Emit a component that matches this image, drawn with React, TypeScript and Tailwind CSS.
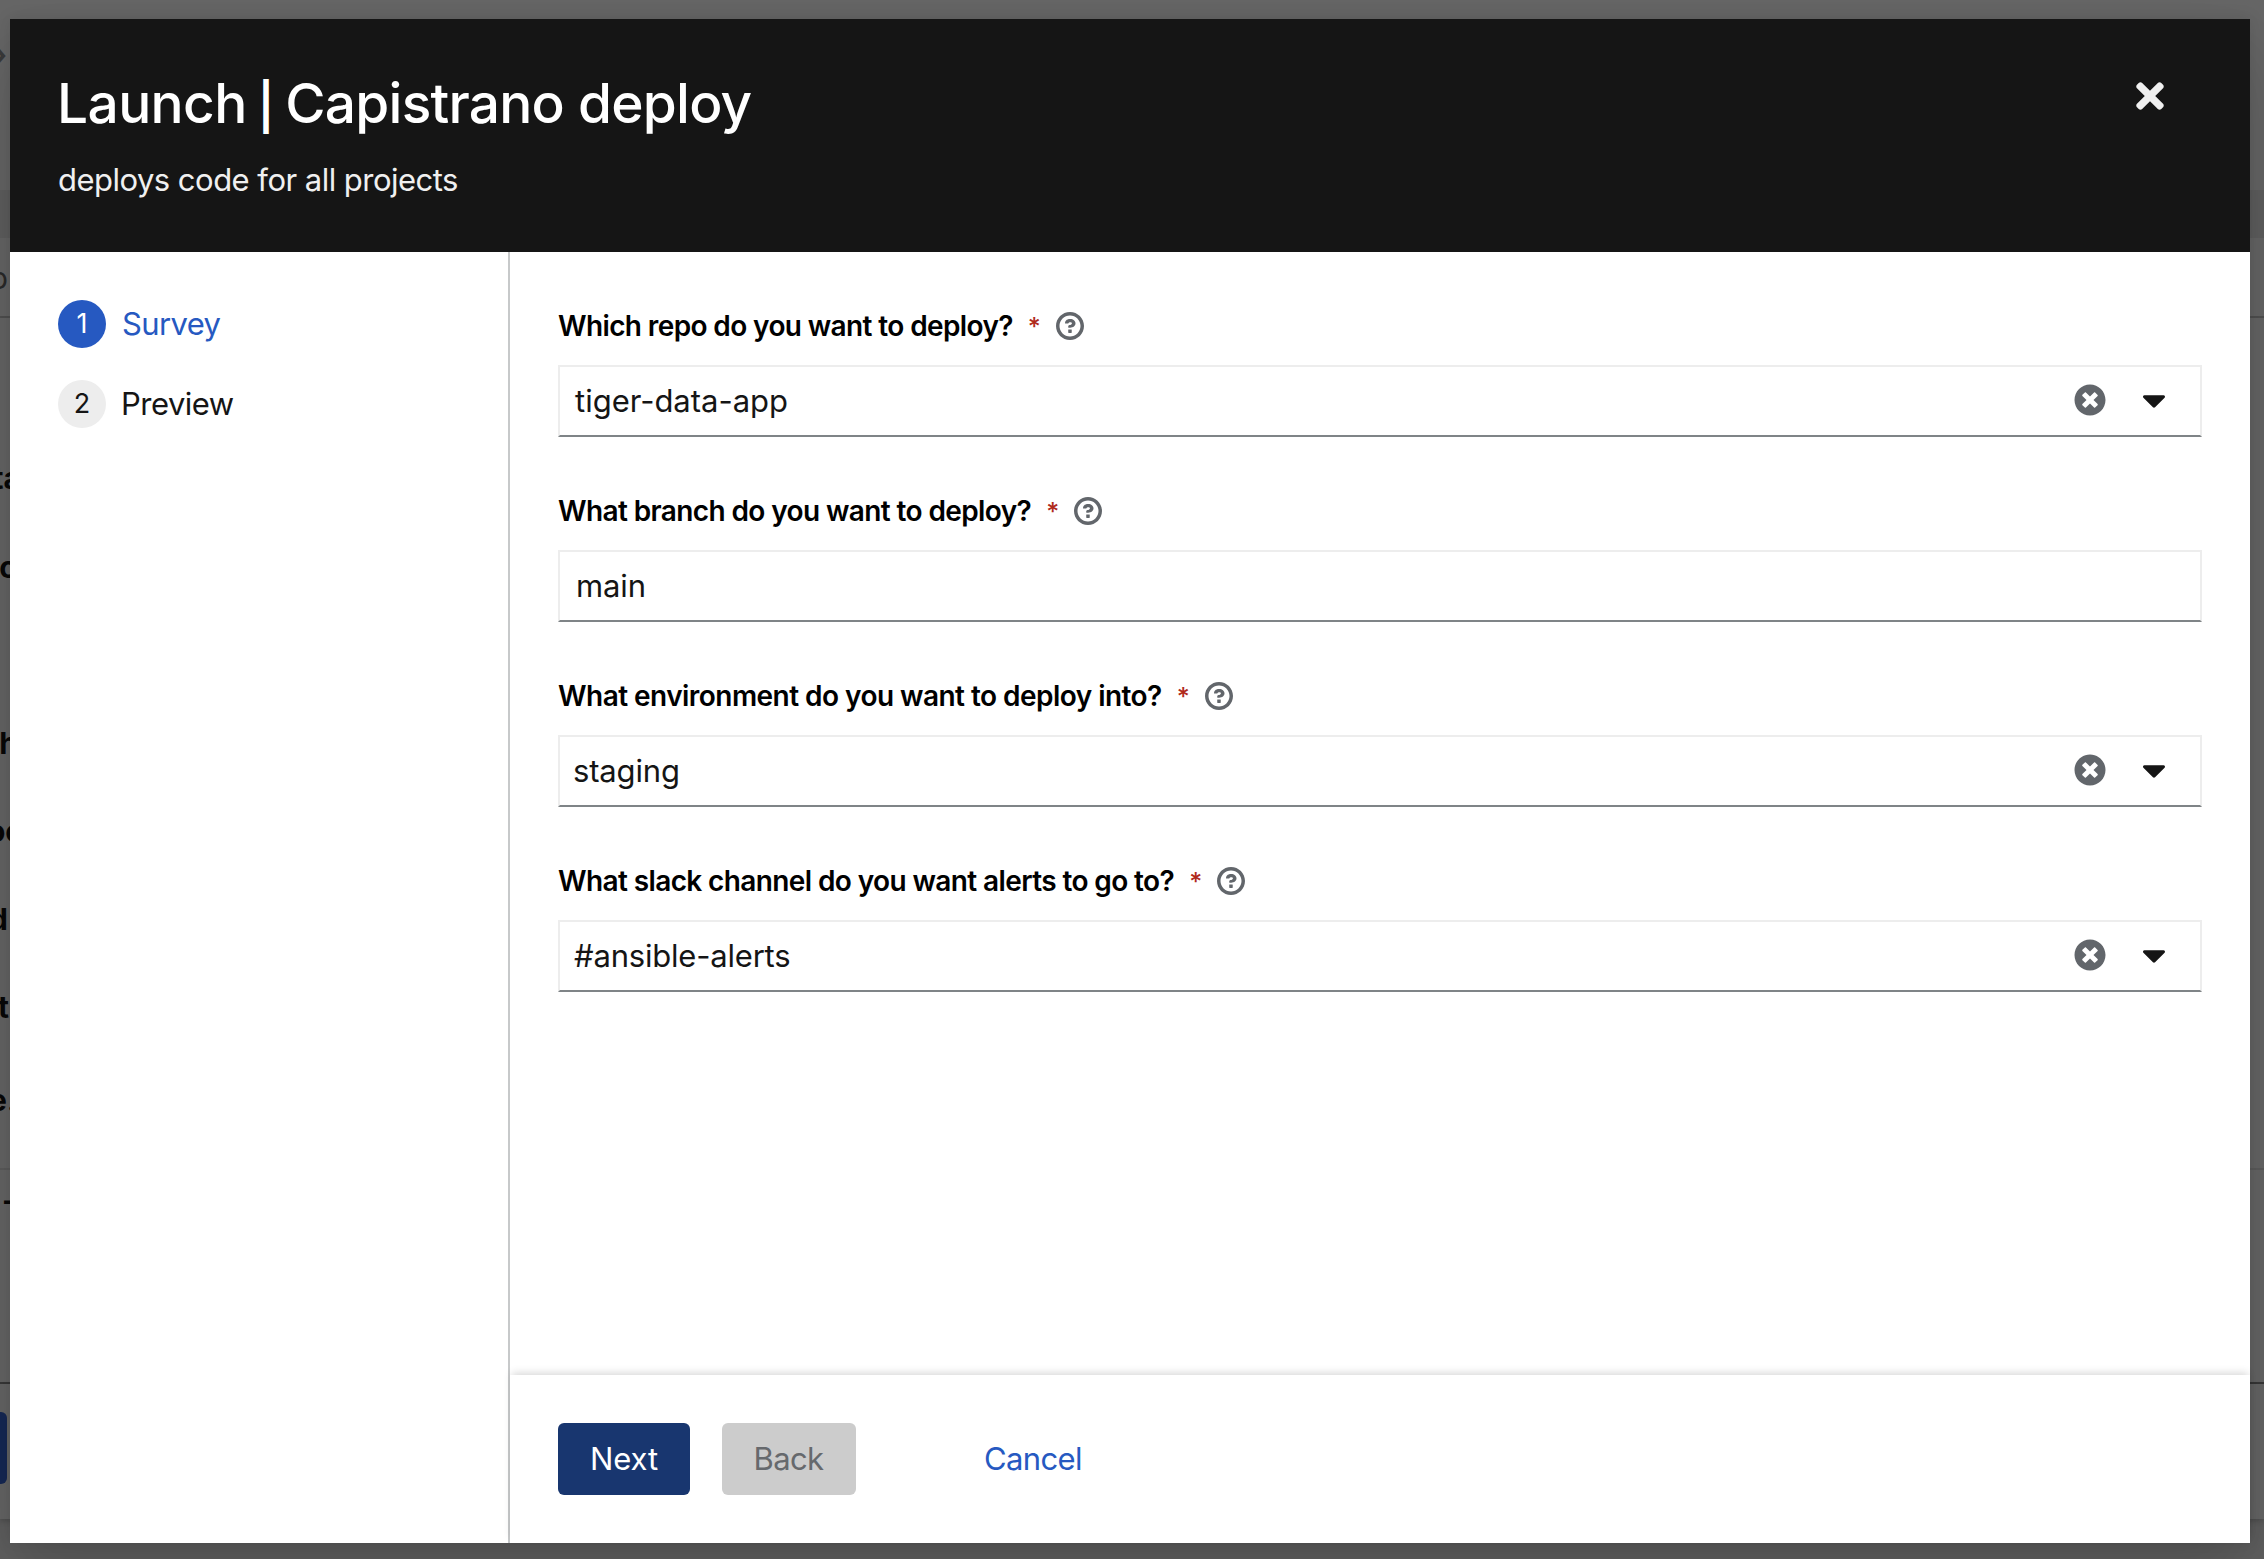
import { FaCaretDown, FaTimes, FaTimesCircle } from "react-icons/fa";

type Field = {
  label: string;
  labelClass: string;
  value: string;
  valueClass: string;
  select: boolean;
};

const fields: Field[] = [
  { label: "Which repo do you want to deploy?", labelClass: "tracking-[-0.62px]", value: "tiger-data-app", valueClass: "pl-[15px] tracking-[-0.01px]", select: true },
  { label: "What branch do you want to deploy?", labelClass: "tracking-[-0.61px]", value: "main", valueClass: "pl-4 tracking-[-0.1px]", select: false },
  { label: "What environment do you want to deploy into?", labelClass: "tracking-[-0.54px]", value: "staging", valueClass: "pl-[13px] tracking-[-0.15px]", select: true },
  { label: "What slack channel do you want alerts to go to?", labelClass: "tracking-[-0.61px]", value: "#ansible-alerts", valueClass: "pl-[14px] tracking-[-0.2px]", select: true },
];

const helpPath =
  "M521.3,576C627.5,576 713.7,502 713.7,413.7C713.7,325.4 627.6,253.6 521.3,253.6C366,253.6 334.5,337.7 329.2,407.2C329.2,414.3 335.2,416 343.5,416L445,416C450.5,416 458,415.5 460.8,406.5C460.8,362.6 582.9,357.1 582.9,413.6C582.9,441.9 556.2,470.9 521.3,473C486.4,475.1 447.3,479.8 447.3,521.7L447.3,553.8C447.3,570.8 456.1,576 472,576ZM575.3,751.3L575.3,655.3C575.3,651 573.6,647 570.6,644C567.6,641 563.5,639.3 559.3,639.3L463.3,639.3C459,639.3 455,641 452,644C449,647 447.3,651 447.3,655.3L447.3,751.3C447.3,755.5 449,759.6 452,762.6C455,765.6 459,767.3 463.3,767.3L559.3,767.3C563.5,767.3 567.6,765.6 570.6,762.6C573.6,759.6 575.3,755.5 575.3,751.3ZM512,896C300.2,896 128,723.9 128,512C128,300.3 300.2,128 512,128C723.8,128 896,300.2 896,512C896,723.8 723.7,896 512,896ZM512.1,0C229.7,0 0,229.8 0,512C0,794.2 229.8,1024 512.1,1024C794.4,1024 1024,794.3 1024,512C1024,229.7 794.4,0 512.1,0Z";

function HelpIcon() {
  return (
    <svg viewBox="0 0 1024 1024" className="ml-[17px] size-7 fill-[#62666b]">
      <path fillRule="evenodd" d={helpPath} />
    </svg>
  );
}

function FormField({ label, labelClass, value, valueClass, select }: Field) {
  return (
    <div className="mb-[46px]">
      <div className="mb-3 flex h-[55px] items-center">
        <span className={`text-[28px] font-semibold leading-none text-black ${labelClass}`}>{label}</span>
        <span className="ml-[15px] w-[11px] pt-1 text-[25px] font-medium leading-none text-[#b02a1c]">*</span>
        <HelpIcon />
      </div>
      <div className="flex h-[72px] items-center border-2 border-[#ededed] border-b-[#7f8487]">
        <span className={`flex-1 ${valueClass}`}>{value}</span>
        {select && (
          <div className="mb-0.5 mr-[27px] flex items-center">
            <FaTimesCircle className="size-8 text-[#62666b]" />
            <FaCaretDown className="ml-[29px] size-[38px] text-[#151515]" />
          </div>
        )}
      </div>
    </div>
  );
}

const fragments = [
  { text: "›", place: "right-[3px] top-[36px] font-bold text-[#3a3a3a]" },
  { text: "o", place: "right-[2px] top-[260px] font-normal text-[#292929]" },
  { text: "ta", place: "right-[-11px] top-[460px]" },
  { text: "c", place: "right-[-7px] top-[549px]" },
  { text: "h", place: "right-[-8px] top-[725px]" },
  { text: "oc", place: "right-[-13px] top-[813px]" },
  { text: "d", place: "right-[2px] top-[901px]" },
  { text: "t", place: "right-[1px] top-[989px]" },
  { text: "e.", place: "right-[-7px] top-[1082px]" },
  { text: "–", place: "right-[-9px] top-[1182px]" },
];

function Backdrop() {
  return (
    <div className="absolute inset-0 flex flex-col overflow-hidden bg-[#5f5f5f]">
      <div className="h-[190px] bg-[#666]" />
      <div className="h-[48px] bg-[#5f5f5f]" />
      <div className="h-[80px] border-b-2 border-[#505050] bg-[#666]" />
      <div className="h-[852px] border-b-2 border-[#5c5c5c] bg-[#666]" />
      <div className="h-[214px] border-b-2 border-[#3a3a3a] bg-[#666]" />
      <div className="h-[135px] bg-[#666] pt-[28px] shadow-[0_2px_6px_rgba(0,0,0,0.2)]">
        <div className="h-[72px] w-[7px] rounded-r-md bg-[#162855]" />
      </div>
      <div className="absolute inset-y-0 left-0 w-[10px] overflow-hidden text-[30px] font-bold leading-[36px] text-[#080808]">
        {fragments.map((f) => (
          <span key={f.place} className={`absolute ${f.place}`}>{f.text}</span>
        ))}
      </div>
    </div>
  );
}

export default function App() {
  return (
    <div className="relative h-[1559px] w-[2264px] overflow-hidden pl-[10px] pt-[19px] font-['Inter',sans-serif] text-[31px] leading-[48px] text-[#151515]">
      <Backdrop />
      <div className="relative flex h-[1524px] w-[2240px] flex-col bg-white shadow-[0_32px_64px_0_rgba(3,3,3,0.16),0_0_16px_0_rgba(3,3,3,0.1)]">
        <header className="flex h-[233px] shrink-0 justify-between bg-[#151515] pl-[48px] pt-[48px] text-white">
          <div>
            <h1 className="-ml-px flex h-[72px] items-baseline whitespace-pre text-[55px] font-medium leading-[72px]">
              <span className="tracking-[-0.6px]">Launch</span>
              <span className="ml-[11px] text-[46px] font-semibold leading-none">|</span>
              <span className="ml-[11px] tracking-[-0.75px]">Capistrano deploy</span>
            </h1>
            <p className="mt-[17px] tracking-[-0.52px] text-[#f0f0f0]">deploys code for all projects</p>
          </div>
          <button className="mr-[80px] mt-[9px] size-10 text-[#f0f0f0]">
            <FaTimes className="size-10" />
          </button>
        </header>
        <div className="flex min-h-0 flex-1">
          <nav className="flex w-[500px] flex-col gap-8 border-r-2 border-[#c7c9ca] pl-[48px] pt-[48px]">
            <div className="flex items-center text-[#2659c1]">
              <span className="flex size-12 items-center justify-center rounded-full bg-[#2659c1] text-[27px] text-white">1</span>
              <span className="ml-4 tracking-[-0.63px]">Survey</span>
            </div>
            <div className="flex items-center">
              <span className="flex size-12 items-center justify-center rounded-full bg-[#ededed] text-[27px]">2</span>
              <span className="ml-[15px] tracking-[-0.5px]">Preview</span>
            </div>
          </nav>
          <div className="flex flex-1 flex-col">
            <main className="flex-1 px-[48px] pt-[46px]">
              {fields.map((f) => (
                <FormField key={f.label} {...f} />
              ))}
            </main>
            <footer className="flex h-[168px] items-center bg-white pl-[48px] shadow-[0_-4px_8px_-2px_rgba(3,3,3,0.16)]">
              <button className="h-[72px] w-[132px] rounded-md bg-[#18366f] tracking-[-0.09px] text-white">Next</button>
              <button className="ml-[32px] h-[72px] w-[134px] rounded-md bg-[#ccc] pr-px tracking-[-0.6px] text-[#66696d]">Back</button>
              <button className="ml-[128px] tracking-[-0.63px] text-[#2659c1]">Cancel</button>
            </footer>
          </div>
        </div>
      </div>
    </div>
  );
}
